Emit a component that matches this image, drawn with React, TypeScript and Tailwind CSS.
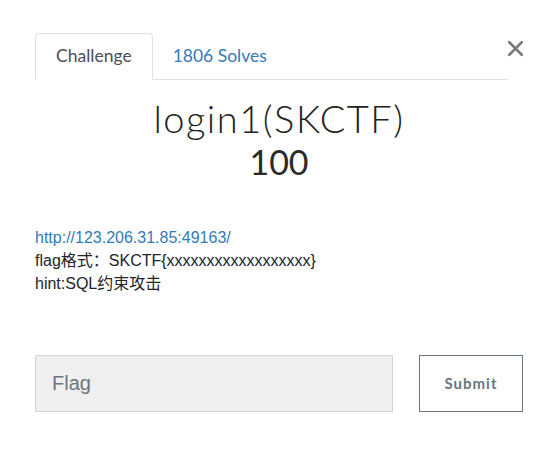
import { X } from "lucide-react";

export default function App() {
  return (
    <div className="h-[466px] w-[558px] bg-white px-[35px] pt-[33px] text-[#212529]" style={{ fontFamily: "Lato, sans-serif" }}>
      {/* Tabs */}
      <div className="flex items-start">
        <div className="flex h-[47px] flex-1 border-b border-[#dee2e6]">
          <div className="-mb-px flex h-[47px] items-center rounded-t border border-b-white border-[#dee2e6] bg-white px-[20px] text-[17.5px] text-[#495057]">
            Challenge
          </div>
          <div className="flex h-[47px] items-center px-[20px] text-[17.5px] text-[#337ab7]">1806 Solves</div>
        </div>
        <button className="mt-[3px] flex w-[15px] justify-center text-[#7a7a7a]">
          <X size={25} strokeWidth={2.5} className="shrink-0" />
        </button>
      </div>

      {/* Title */}
      <div className="mt-[16px] text-center">
        <h2 className="text-[38px] font-light leading-[44px] tracking-[1.5px] text-[#222]">login1(SKCTF)</h2>
        <h3 className="mt-[2px] text-[34px] leading-[40px] text-[#2a2a2a]">100</h3>
      </div>

      {/* Description */}
      <div className="mt-[44px] text-[16px] leading-[23px] text-[#212529]" style={{ fontFamily: '"Liberation Sans", "Noto Sans CJK SC", sans-serif' }}>
        <a className="text-[#337ab7]">http://123.206.31.85:49163/</a>
        <p>flag格式：SKCTF{"{"}xxxxxxxxxxxxxxxxxx{"}"}</p>
        <p>hint:SQL约束攻击</p>
      </div>

      {/* Submit row */}
      <div className="mt-[60px] flex gap-[26px]">
        <input
          placeholder="Flag"
          className="h-[57px] w-[358px] border border-[#d3d6d9] bg-[#efefef] px-[16px] text-[20px] text-[#495057] placeholder:text-[#6c757d] outline-none"
          style={{ fontFamily: '"Liberation Sans", sans-serif' }}
        />
        <button className="h-[57px] w-[104px] border border-[#6c757d] bg-white text-[15px] font-bold tracking-[1px] text-[#6c757d]">
          Submit
        </button>
      </div>
    </div>
  );
}
